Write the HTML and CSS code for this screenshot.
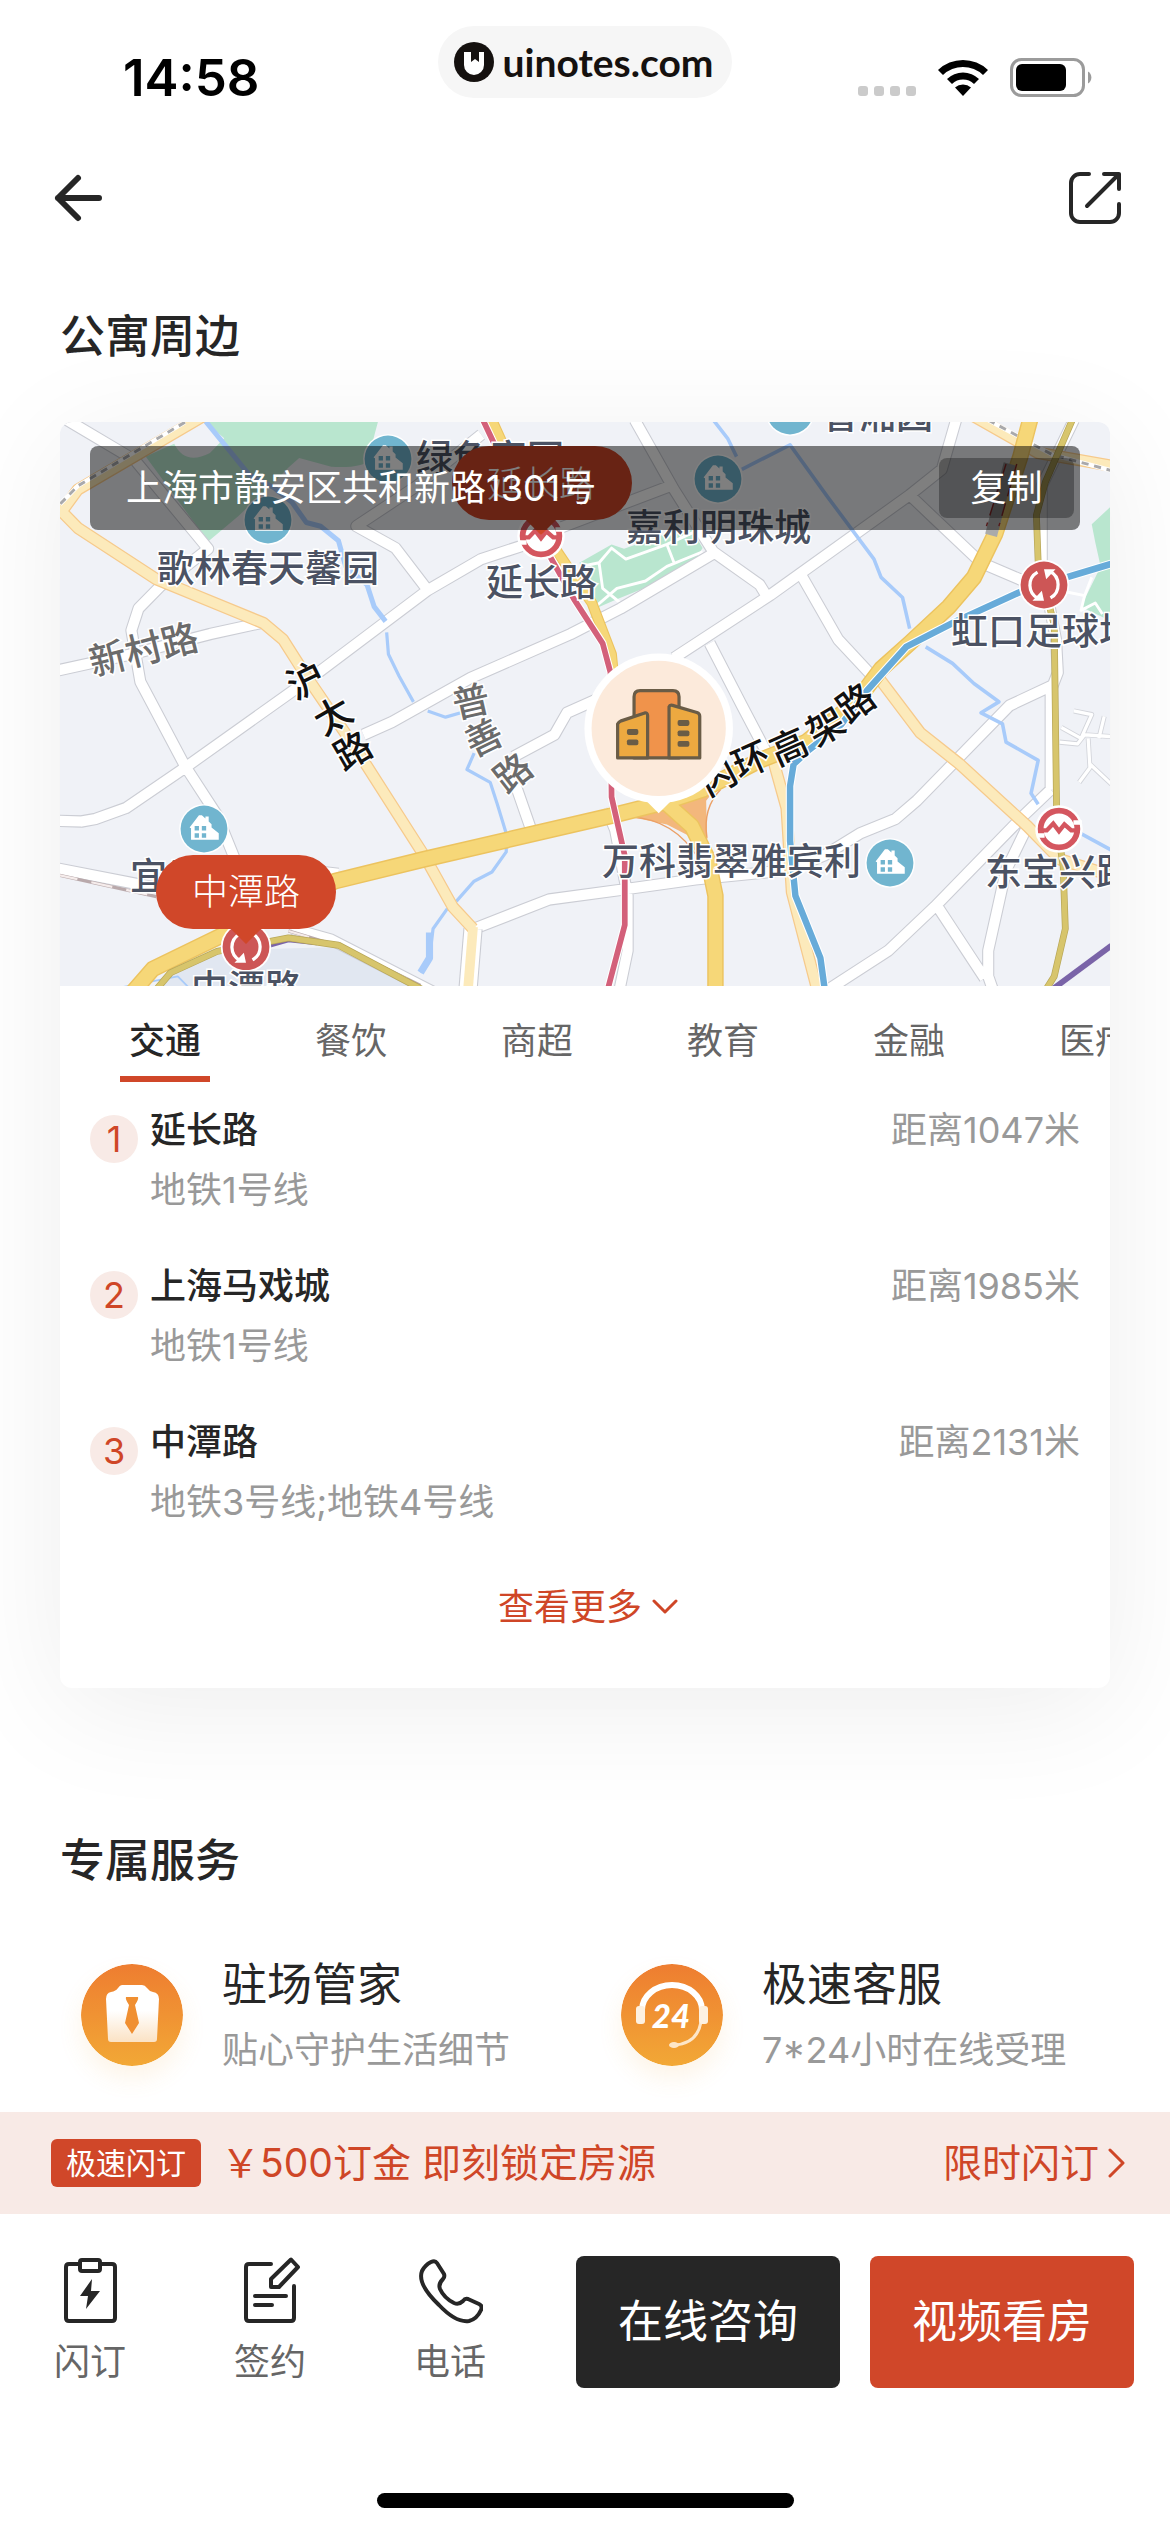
FILE: index.html
```html
<!DOCTYPE html>
<html lang="zh-CN">
<head>
    <meta charset="UTF-8">
    <meta name="viewport" content="width=device-width, initial-scale=1.0">
    <title>公寓周边</title>
    <link rel="stylesheet" href="styles.css">
</head>
<body>

    <header class="status-bar">
        <span class="time">14:58</span>
        <div class="brand">
            <svg width="40" height="40" viewBox="0 0 40 40" aria-hidden="true">
                <circle cx="20" cy="20" r="20" fill="#15110f"/>
                <path d="M10 10h7v10l4-3 4 3V10h5v13a9.500 9.500 0 0 1-20 0z" fill="#fff"/>
            </svg>
            <span>uinotes.com</span>
        </div>
        <div class="status-icons">
            <svg width="58" height="38" viewBox="0 0 58 38" fill="#cbcbcb" aria-hidden="true">
                <rect x="0" y="28" width="10" height="10" rx="3"/>
                <rect x="16" y="28" width="10" height="10" rx="3"/>
                <rect x="32" y="28" width="10" height="10" rx="3"/>
                <rect x="48" y="28" width="10" height="10" rx="3"/>
            </svg>
            <svg width="52" height="38" viewBox="0 0 52 38" aria-hidden="true">
                <path d="M1 12a36 36 0 0 1 50 0l-5 5a29 29 0 0 0-40 0z"/>
                <path d="M10 21a23 23 0 0 1 32 0l-5 5a16 16 0 0 0-22 0z"/>
                <path d="M18 29.500a12 12 0 0 1 16 0L26 38z"/>
            </svg>
            <svg width="82" height="40" viewBox="0 0 82 40" aria-hidden="true">
                <rect x="1.500" y="1.500" width="72" height="36" rx="10" fill="none" stroke="#9b9b9b" stroke-width="3"/>
                <rect x="6" y="6" width="50" height="27" rx="6"/>
                <path d="M78 13.500a7 7 0 0 1 0 12z" fill="#9b9b9b"/>
            </svg>
        </div>
    </header>

    <nav class="nav">
        <button class="icon-button" aria-label="返回">
            <svg width="54" height="54" viewBox="0 0 54 54" fill="none" stroke="#262626" stroke-width="6" stroke-linecap="round" stroke-linejoin="round">
                <path d="M27 7 7 27l20 20M7 27h41"/>
            </svg>
        </button>
        <button class="icon-button" aria-label="分享">
            <svg width="54" height="54" viewBox="0 0 54 54" fill="none" stroke="#262626" stroke-width="4" stroke-linecap="round" stroke-linejoin="round">
                <path d="M21 3h-9a9 9 0 0 0-9 9v30a9 9 0 0 0 9 9h30a9 9 0 0 0 9-9V33M36 3h15v15M51 3 19 35"/>
            </svg>
        </button>
    </nav>

    <main class="content">
        <h1 class="section-title">公寓周边</h1>

        <section class="card">
            <div class="map">
                <svg class="map-canvas" viewBox="0 0 1050 564" preserveAspectRatio="xMidYMid slice" role="img" aria-label="地图">
                    <defs>
                        <g id="home">
                            <circle r="69" fill="#fff"/>
                            <circle r="65" fill="#71b5cf"/>
                            <path d="M-40-4-14-38h8l10 9v-6h9v14l8 8v9l20 16v18h-77V-2z" fill="#fff"/>
                            <path d="M-26-8h12v12h-12zM-6-8H6V4H-6zM-26 12h12v12h-12zM-6 12H6v12H-6z" fill="#71b5cf"/>
                        </g>
                        <g id="loop">
                            <circle r="70" fill="#fff"/>
                            <circle r="65" fill="#cd5656"/>
                            <path d="M-16 38A42 42 0 0 1-18-36M16-38A42 42 0 0 1 18 36" fill="none" stroke="#fff" stroke-width="9"/>
                            <path d="M-32 44H0L-6 16zM32-44H0L6-16z" fill="#fff"/>
                        </g>
                        <g id="metro">
                            <circle r="66" fill="#fff"/>
                            <circle r="51" fill="none" stroke="#d4565f" stroke-width="16"/>
                            <path d="M-62 18h22M40-18h24" stroke="#fff" stroke-width="12"/>
                            <path d="M-58 4h24l18-19L0 6l15-19L34 4h24" fill="none" stroke="#d4565f" stroke-width="12"/>
                        </g>
                        <path id="streets" d="M20 0 210 110 415 352 280 455 220 515 200 575 225 715 350 945 440 1080 490 1200M-10 685 200 640 420 585 560 555M-10 1095 60 1097 100 1090 185 1060 350 950 710 700 1030 465 1180 380 1290 345 1400 295 1710 180M850 860 930 825 1150 705 1430 585 1570 515 1830 365M1720 650 1990 478 2380 205 2470 135 2510 0M1610 0 1720 190 1830 360 1960 450 1985 490M2380 205 2450 270 2580 390 2700 440M2080 430 2180 600 2290 715M1820 610 1910 780 1980 910M1270 920 1385 860 1420 800 1500 765M1270 980 1320 1120M1180 40 1000 180 830 290 940 350 1030 465M-10 1225 280 1280M690 1230 780 1240M650 1390 760 1420 1100 1590M1160 1390 1370 1310 1560 1285 1780 1255 2040 1230 2140 1190 2240 1130 2340 1090 2400 1040 2660 780 2780 725M2130 1570 2320 1450 2450 1330 2700 1080 2775 1010M2455 1325 2590 1525M2710 1110 2650 1230 2600 1450 2600 1520 2625 1590M2840 0 2750 180 2750 400 2790 600 2795 690 2775 740 2775 1010M1530 1060 1555 1120 1590 1300 1590 1450 1560 1590"/>
                        <path id="lanes" d="M2840 795 2890 805 2860 870 2805 840M2800 880 2850 885 2870 860 2945 865M2880 870 2885 950 2855 990M2885 940 2945 995M2910 870 2925 810"/>
                        <path id="roads" d="M400-10 50 190 5 250 50 295 270 435 570 555 625 600 690 700 830 900 1020 1190 1100 1330 1157 1390M2560-10 2740 90 2945 125M2290 700 2410 855 2520 940 2710 1110 2800 1200 2945 1245M1995 920 2035 1060 2050 1290 2130 1590"/>
                        <path id="ring" d="M180 1590 260 1500 460 1405 770 1260 1020 1200 1550 1080 1680 1048 1800 1010 1960 930 2090 880 2230 770 2300 680 2380 610 2490 510 2560 430 2620 310 2690 100 2720-10M1690 1040 1770 1110 1815 1200 1836 1300 1836 1590"/>
                        <path id="elevated" d="M1205-10 1345 290 1400 370 1490 500 1545 640 1550 690"/>
                        <path id="line1" d="M1180-10 1325 290 1440 490 1520 610 1542 690 1545 1030 1582 1190 1582 1380 1525 1590"/>
                        <path id="line8" d="M2945 393 2700 465 2510 550 2370 620 2260 740 2190 830 2100 900 2055 940 2045 1000 2045 1150 2060 1300 2130 1470 2147 1590"/>
                        <path id="line3" d="M2840-10 2760 170 2735 260 2740 390 2785 560 2792 1100 2810 1220 2816 1390 2785 1520 2740 1590M240 1590 310 1510 440 1452 640 1415 780 1435 1080 1590"/>
                    </defs>

                    <g transform="translate(0 -2) scale(.357 .366)" fill="none" stroke-linejoin="round">
                        <!-- parks and blocks -->
                        <g fill="#b9e6cf">
                            <path d="M400 0H892L862 110Q850 132 760 128L670 104 640 130 600 170 500 262 415 332 240 100 320 65Q350 125 420 90L460 50Z"/>
                            <path d="M1455 390 1545 340 1580 352 1700 310 1770 300 1800 350 1780 380 1660 450 1560 490 1500 515 1480 440Z"/>
                            <path d="M2945 235 2890 285 2900 335 2915 400 2880 470 2860 510 2945 550Z"/>
                        </g>
                        <path d="M600 1445 790 1440 1080 1590H250L320 1500 480 1450Z" fill="#e1e7f1"/>
                        <path d="M120 1560 330 1520 400 1590" stroke="#a8cbfa" stroke-width="5"/>
                        <g stroke="#fff" stroke-width="8">
                            <path d="M1460 400 1510 390 1545 350 1585 380 1700 340 1790 300M1500 510 1560 460 1640 440 1700 400 1800 360M1510 390 1520 460 1570 500M1700 340 1720 390"/>
                            <path d="M2820 470 2870 480 2860 520 2900 500 2920 530M2870 480 2890 430"/>
                        </g>

                        <!-- streets: grey edge, then white fill -->
                        <use href="#lanes" stroke="#d3d5db" stroke-width="14"/>
                        <use href="#lanes" stroke="#fff" stroke-width="9"/>
                        <use href="#streets" class="street-edge"/>
                        <use href="#streets" class="street-fill"/>

                        <!-- railway -->
                        <path d="M-10 1242 270 1302M640 1396 790 1440 1010 1545" stroke="#b9a9ab" stroke-width="9"/>
                        <path d="M-10 1242 270 1302M640 1396 790 1440 1010 1545" stroke="#f5eceb" stroke-width="6" stroke-dasharray="60 40"/>

                        <!-- rivers -->
                        <g stroke="#a8cbfa">
                            <path d="M405 0 480 90 530 150 600 185 650 225 690 280 730 290 780 330 800 400 860 450 880 510 912 550" stroke-width="14"/>
                            <path d="M915 580 920 640 950 700 990 770M1030 795 1080 812 1140 795M1160 910 1140 955 1205 990 1225 1050 1250 1130 1250 1180 1210 1235 1160 1260 1110 1315M1085 1335 1045 1390 1035 1470 1010 1510" stroke-width="9"/>
                            <path d="M1830 0 1870 50 1895 100M1910 135 1990 95 2045 68 2150 210 2280 380 2300 430 2360 485 2380 570M2425 620 2500 665 2560 720 2630 770 2580 800 2640 830 2650 880 2740 930 2720 1020 2740 1050M2860 1130 2945 1175" stroke-width="10"/>
                            <path d="M1035 1400 1035 1470 1010 1510" stroke-width="20"/>
                        </g>

                        <!-- secondary roads -->
                        <path d="M1157 1390 1140 1590" stroke="#c9cbd2" stroke-width="54"/>
                        <path d="M1157 1390 1140 1590" stroke="#fff" stroke-width="48"/>
                        <use href="#roads" class="road-edge"/>
                        <use href="#roads" class="road-fill"/>
                        <path d="M1157 1385 1140 1590" class="road-fill"/>
                        <path d="M350 6 50 180 0 230M2600 0 2780 95 2945 138" stroke="#fff" stroke-width="12"/>
                        <path d="M350 6 50 180 0 230M2600 0 2780 95 2945 138" stroke="#a9a9ab" stroke-width="8" stroke-dasharray="20 16"/>

                        <!-- expressways -->
                        <path d="M1600 1085 1640 1040 1730 1010 1850 990 1810 1040 1812 1140 1790 1150 1700 1105Z" fill="#f3b77c"/>
                        <path d="M1600 1085Q1720 1090 1790 1200L1812 1140Q1800 1060 1850 1010" stroke="#eba066" stroke-width="4"/>
                        <use href="#ring" stroke="#ecc35f" stroke-width="46"/>
                        <use href="#ring" stroke="#f6d778" stroke-width="38"/>
                        <use href="#elevated" stroke="#ecc35f" stroke-width="30"/>
                        <use href="#elevated" stroke="#f6d778" stroke-width="24"/>
                        <path d="M2660 120 2608 315" stroke="#aaa" stroke-width="34"/>
                        <path d="M2650 120 2595 290M2680 120 2630 290" stroke="#a33" stroke-width="4" stroke-dasharray="36 20"/>

                        <!-- metro lines -->
                        <use href="#line1" stroke="#fff" stroke-width="22"/>
                        <use href="#line1" stroke="#d3607a" stroke-width="16"/>
                        <use href="#line8" stroke="#fff" stroke-width="24"/>
                        <use href="#line8" stroke="#67abd9" stroke-width="18"/>
                        <path d="M540 1450 640 1422 720 1430" stroke="#7a64a8" stroke-width="10"/>
                        <use href="#line3" stroke="#b8a758" stroke-width="19"/>
                        <use href="#line3" stroke="#d7c56c" stroke-width="15"/>
                        <path d="M2945 1436 2760 1570" stroke="#7a64a8" stroke-width="16"/>
                    </g>

                    <!-- pins -->
                    <use href="#home" transform="translate(328 37) scale(.36)"/>
                    <use href="#home" transform="translate(208 98) scale(.36)"/>
                    <use href="#home" transform="translate(144 407) scale(.36)"/>
                    <use href="#home" transform="translate(658 57) scale(.36)"/>
                    <use href="#home" transform="translate(730 -11) scale(.36)"/>
                    <use href="#home" transform="translate(830 441) scale(.36)"/>
                    <use href="#metro" transform="translate(481 114) scale(.36)"/>
                    <use href="#metro" transform="translate(999 407) scale(.36)"/>
                    <use href="#loop" transform="translate(984 163) scale(.36)"/>
                    <use href="#loop" transform="translate(186 525) scale(.36)"/>

                    <g class="map-label">
                        <text x="356" y="50">绿色家园</text>
                        <text x="762" y="7">香湘园</text>
                        <text x="97" y="160">歌林春天馨园</text>
                        <text x="426" y="174">延长路</text>
                        <text x="566" y="119">嘉利明珠城</text>
                        <text x="891" y="223">虹口足球场</text>
                        <text x="542" y="453">万科翡翠雅宾利</text>
                        <text x="925" y="464">东宝兴路</text>
                        <text x="70" y="468">宜川</text>
                        <text x="131" y="580">中潭路</text>
                    </g>
                    <g class="map-label road-name">
                        <text transform="translate(33 254) rotate(-14)">新村路</text>
                        <g text-anchor="middle">
                            <text transform="translate(411 280) rotate(-13)" y="13">普</text>
                            <text transform="translate(424 316) rotate(-26)" y="13">善</text>
                            <text transform="translate(453 351) rotate(-38)" y="13">路</text>
                        </g>
                    </g>
                    <g class="map-label main-road" text-anchor="middle">
                        <text transform="translate(246 259) rotate(-26)" y="13">沪</text>
                        <text transform="translate(273 294) rotate(-30)" y="13">太</text>
                        <text transform="translate(293 329) rotate(-30)" y="13">路</text>
                        <text transform="translate(658 355) rotate(-28)" y="13">内</text>
                        <text transform="translate(691 338) rotate(-24)" y="13">环</text>
                        <text transform="translate(729 325) rotate(-24)" y="13">高</text>
                        <text transform="translate(766 305) rotate(-30)" y="13">架</text>
                        <text transform="translate(796 281) rotate(-36)" y="13">路</text>
                    </g>

                    <!-- apartment marker -->
                    <g transform="translate(0 4) scale(.357 .36)">
                        <path d="M1610 1010 1677 1076 1744 1010Z" fill="#fff"/>
                        <circle cx="1677" cy="840" r="208" fill="#fff"/>
                        <circle cx="1677" cy="840" r="188" fill="#fceadb"/>
                        <g stroke="#6a5c46" stroke-width="9" stroke-linejoin="round">
                            <path d="M1608 922V752q0-17 17-17h92q17 0 17 17v170z" fill="#f0934b"/>
                            <path d="M1562 922V828q3-6 10-9l66-22q8-1 8 7v118z" fill="#eda940"/>
                            <path d="M1706 922V780q2-6 10-4l68 20q8 3 8 10v116z" fill="#eda940"/>
                        </g>
                        <g fill="#6a5c46">
                            <rect x="1588" y="842" width="32" height="16" rx="5"/>
                            <rect x="1588" y="871" width="32" height="16" rx="5"/>
                            <rect x="1730" y="817" width="33" height="16" rx="5"/>
                            <rect x="1730" y="846" width="33" height="16" rx="5"/>
                            <rect x="1730" y="875" width="33" height="16" rx="5"/>
                        </g>
                    </g>

                    <g class="station">
                        <path d="M392 61a37 37 0 0 1 37-37h106a37 37 0 0 1 0 74h-39l-15 15-15-15h-37a37 37 0 0 1-37-37z"/>
                        <text x="481" y="75">延长路</text>
                        <path d="M96 470a37 37 0 0 1 37-37h106a37 37 0 0 1 0 74h-38l-15 15-15-15h-38a37 37 0 0 1-37-37z"/>
                        <text x="186" y="483">中潭路</text>
                    </g>
                </svg>

                <div class="address">
                    <span>上海市静安区共和新路1301号</span>
                    <button class="copy">复制</button>
                </div>
            </div>

            <div class="tabs">
                <button class="tab active">交通</button>
                <button class="tab">餐饮</button>
                <button class="tab">商超</button>
                <button class="tab">教育</button>
                <button class="tab">金融</button>
                <button class="tab">医疗</button>
            </div>

            <ol class="places">
                <li class="place">
                    <span class="place-num">1</span>
                    <div class="place-text">
                        <h3>延长路</h3>
                        <p>地铁1号线</p>
                    </div>
                    <span class="distance">距离1047米</span>
                </li>
                <li class="place">
                    <span class="place-num">2</span>
                    <div class="place-text">
                        <h3>上海马戏城</h3>
                        <p>地铁1号线</p>
                    </div>
                    <span class="distance">距离1985米</span>
                </li>
                <li class="place">
                    <span class="place-num">3</span>
                    <div class="place-text">
                        <h3>中潭路</h3>
                        <p>地铁3号线;地铁4号线</p>
                    </div>
                    <span class="distance">距离2131米</span>
                </li>
            </ol>

            <button class="more">
                查看更多
                <svg width="26" height="18" viewBox="0 0 26 18" fill="none" stroke="#cf4627" stroke-width="3" stroke-linecap="round" stroke-linejoin="round" aria-hidden="true">
                    <path d="m2 3 11 11L24 3"/>
                </svg>
            </button>
        </section>

        <h2 class="section-title">专属服务</h2>

        <section class="services">
            <div class="service">
                <svg class="service-icon" viewBox="0 0 102 102" aria-hidden="true">
                    <defs>
                        <linearGradient id="orange" x1="0" y1="0" x2="0" y2="1">
                            <stop offset="0" stop-color="#ee7d30"/>
                            <stop offset="1" stop-color="#f2a836"/>
                        </linearGradient>
                        <linearGradient id="cream" x1="0" y1="0" x2="0" y2="1">
                            <stop offset=".45" stop-color="#fff"/>
                            <stop offset="1" stop-color="#fbe2c4"/>
                        </linearGradient>
                    </defs>
                    <circle cx="51" cy="51" r="51" fill="url(#orange)"/>
                    <path d="M41 21h20q3 0 5 3 2 3 6 4 6 1 6 7l-2 40q0 3-3 3H30q-3 0-3-3l-2-40q0-6 5-7t7-4q2-3 4-3z" fill="url(#cream)"/>
                    <path d="M45 33h12q1 2-3 8l4 18-7 11-7-11 4-18q-4-6-3-8z" fill="#f08f31"/>
                </svg>
                <div class="service-text">
                    <h3>驻场管家</h3>
                    <p>贴心守护生活细节</p>
                </div>
            </div>
            <div class="service">
                <svg class="service-icon" viewBox="0 0 102 102" aria-hidden="true">
                    <circle cx="51" cy="51" r="51" fill="url(#orange)"/>
                    <path d="M21 46a30 25 0 0 1 60 0" fill="none" stroke="#fff" stroke-width="6"/>
                    <path d="M80 58Q76 80 53 81" fill="none" stroke="#fde6c9" stroke-width="3"/>
                    <ellipse cx="53" cy="81" rx="5" ry="3" fill="#fde6c9"/>
                    <rect x="15" y="42" width="9" height="18" rx="3" fill="#fdf1e1"/>
                    <rect x="78" y="42" width="9" height="18" rx="3" fill="#fdf1e1"/>
                    <text class="badge-24" x="50" y="64">24</text>
                </svg>
                <div class="service-text">
                    <h3>极速客服</h3>
                    <p>7*24小时在线受理</p>
                </div>
            </div>
        </section>
    </main>

    <footer class="footer">
        <div class="promo">
            <span class="tag">极速闪订</span>
            <span>￥500订金 即刻锁定房源</span>
            <a href="#" class="promo-link">
                限时闪订
                <svg width="18" height="30" viewBox="0 0 18 30" fill="none" stroke="#cf4627" stroke-width="3" stroke-linecap="round" stroke-linejoin="round" aria-hidden="true">
                    <path d="m2 2 13 13L2 28"/>
                </svg>
            </a>
        </div>

        <div class="actions">
            <button class="action">
                <svg width="66" height="72" viewBox="0 0 66 72" fill="none" stroke="#262626" stroke-width="4" stroke-linejoin="round" aria-hidden="true">
                    <path d="M22 8H12q-3 0-3 3v51q0 3 3 3h43q3 0 3-3V11q0-3-3-3H44"/>
                    <rect x="23" y="4" width="20" height="11" rx="2"/>
                    <path d="M35 23 23 40h8l-2 13 14-18h-9z" fill="#262626" stroke="none"/>
                </svg>
                闪订
            </button>
            <button class="action">
                <svg width="66" height="72" viewBox="0 0 66 72" fill="none" stroke="#262626" stroke-width="4" stroke-linecap="round" stroke-linejoin="round" aria-hidden="true">
                    <path d="M34 8H12q-3 0-3 3v51q0 3 3 3h42q3 0 3-3V30"/>
                    <path d="M54 3.500 61 11 42 31h-8v-8z"/>
                    <path d="M18 40h31M18 49h17"/>
                </svg>
                签约
            </button>
            <button class="action">
                <svg width="66" height="72" viewBox="0 0 66 72" fill="none" stroke="#262626" stroke-width="4" stroke-linejoin="round" aria-hidden="true">
                    <path d="M14 6q4-2 6 1l7 11q1 3-1 5-5 5-3 10 4 9 14 14 5 2 9-2 2-3 5-2l11 5q4 2 2 6-4 9-12 11-13 2-30-16Q0 28 5 15q3-6 9-9z"/>
                </svg>
                电话
            </button>
            <div class="buttons">
                <button class="button dark">在线咨询</button>
                <button class="button">视频看房</button>
            </div>
        </div>

        <div class="home-indicator"></div>
    </footer>

</body>
</html>
```
FILE: styles.css
```css
* {
    box-sizing: border-box;
}
body {
    margin: 0;
    min-height: 100vh;
    display: flex;
    flex-direction: column;
    background-color: #fff;
    color: #262626;
    font-family: Inter, "Noto Sans CJK SC", sans-serif;
    font-size: 36px;
    line-height: 60px;
}
h1, h2, h3, p, ol {
    margin: 0;
    padding: 0;
    font-weight: 400;
}
button {
    padding: 0;
    border: none;
    background: none;
    color: inherit;
    font: inherit;
    cursor: pointer;
}
svg {
    display: block;
    flex: none;
}

/* status bar and navigation */
.status-bar {
    display: grid;
    grid-template-columns: 1fr auto 1fr;
    height: 138px;
    padding: 26px 78px 0 123px;
}
.time {
    padding-top: 22px;
    font-size: 51px;
    font-weight: 600;
    color: #000;
}
.brand {
    display: flex;
    align-items: center;
    gap: 8px;
    height: 72px;
    margin-right: 45px;
    padding: 0 18px 0 16px;
    border-radius: 36px;
    background-color: #f6f6f6;
    color: #15110f;
    font-family: Lato, sans-serif;
    font-size: 39px;
    font-weight: 700;
}
.status-icons {
    display: flex;
    justify-content: flex-end;
    gap: 21px;
    padding-top: 32px;
}
.nav {
    display: flex;
    align-items: center;
    justify-content: space-between;
    height: 120px;
    padding: 0 48px 0 51px;
}

/* sections */
.content {
    padding: 0 60px;
}
.section-title {
    padding: 44px 0 50px;
    font-size: 45px;
    line-height: 70px;
    font-weight: 500;
}
.card {
    margin-bottom: 94px;
    border-radius: 12px;
    background-color: #fff;
    box-shadow: 0 20px 120px rgba(0, 0, 0, 0.07);
    overflow: hidden;
}

/* map */
.map {
    position: relative;
    height: 564px;
    background-color: #f0f2f7;
}
.map-canvas {
    width: 100%;
    height: 100%;
}
.street-edge {
    stroke: #cbcdd4;
    stroke-width: 34px;
}
.street-fill {
    stroke: #fff;
    stroke-width: 28px;
}
.road-edge {
    stroke: #f6ca8c;
    stroke-width: 34px;
}
.road-fill {
    stroke: #fceabb;
    stroke-width: 27px;
}
.map-label {
    fill: #4b5263;
    stroke: #fff;
    stroke-width: 3px;
    paint-order: stroke;
    font-size: 37px;
    font-weight: 500;
}
.road-name {
    fill: #6b6b6b;
}
.main-road {
    fill: #111;
}
.station {
    fill: #d04729;
    font-size: 36px;
    text-anchor: middle;
}
.station text {
    fill: #fff;
    font-weight: 300;
}
.address {
    position: absolute;
    top: 24px;
    left: 30px;
    right: 30px;
    display: flex;
    align-items: center;
    justify-content: space-between;
    height: 84px;
    padding: 0 6px 0 36px;
    border-radius: 8px;
    background-color: rgba(0, 0, 0, 0.5);
    color: #fff;
}
.copy {
    width: 135px;
    height: 60px;
    border-radius: 8px;
    background-color: rgba(0, 0, 0, 0.3);
}

/* tabs */
.tabs {
    display: flex;
    padding-left: 12px;
    overflow: hidden;
}
.tab {
    display: flex;
    flex-direction: column;
    align-items: center;
    flex: none;
    width: 186px;
    height: 96px;
    padding-top: 25px;
    color: #666;
}
.tab.active {
    color: #262626;
    font-weight: 500;
}
.tab.active::after {
    content: "";
    width: 90px;
    height: 6px;
    margin-top: 5px;
    background-color: #d04729;
}

/* nearby places */
.places {
    display: flex;
    flex-direction: column;
    gap: 36px;
    padding: 18px 30px 45px;
    list-style: none;
}
.place {
    display: flex;
    gap: 12px;
}
.place-num {
    width: 48px;
    height: 48px;
    margin-top: 15px;
    border-radius: 50%;
    background-color: #f8eae6;
    color: #cf4627;
    line-height: 48px;
    text-align: center;
}
.place-text {
    flex: 1;
}
.place h3 {
    font-size: 36px;
    font-weight: 500;
}
.place p, .distance {
    color: #999;
}
.more {
    display: flex;
    align-items: center;
    justify-content: center;
    gap: 10px;
    width: 100%;
    padding: 0 0 51px 6px;
    color: #cf4627;
}

/* services */
.services {
    display: grid;
    grid-template-columns: 540px 1fr;
    padding: 4px 0 30px 21px;
}
.service {
    display: flex;
    align-items: center;
    gap: 39px;
}
.service-icon {
    width: 102px;
    height: 102px;
    border-radius: 50%;
    box-shadow: 0 12px 24px rgba(242, 168, 54, 0.12);
}
.service h3 {
    font-size: 45px;
    line-height: 70px;
}
.service p {
    color: #999;
}
.badge-24 {
    fill: #fff;
    font-family: Lato, sans-serif;
    font-size: 33px;
    font-style: italic;
    font-weight: 900;
    text-anchor: middle;
}

/* footer */
.footer {
    margin-top: auto;
    background-color: #fff;
}
.promo {
    display: flex;
    align-items: center;
    height: 102px;
    padding: 0 44px 0 51px;
    background-color: #f8eae6;
    color: #cf4627;
    font-size: 39px;
}
.tag {
    margin-right: 20px;
    padding: 0 15px;
    border-radius: 6px;
    background-color: #d04729;
    color: #fff;
    font-size: 30px;
    line-height: 48px;
}
.promo-link {
    display: flex;
    align-items: center;
    gap: 9px;
    margin-left: auto;
    color: inherit;
    text-decoration: none;
}
.actions {
    display: flex;
    align-items: flex-start;
    padding: 42px 36px 0 0;
}
.action {
    display: flex;
    flex-direction: column;
    align-items: center;
    gap: 4px;
    width: 180px;
    color: #666;
}
.buttons {
    display: flex;
    flex: 1;
    gap: 30px;
    margin-left: 36px;
}
.button {
    flex: 1;
    height: 132px;
    border-radius: 8px;
    background-color: #d04729;
    color: #fff;
    font-size: 45px;
}
.button.dark {
    background-color: #262626;
}
.home-indicator {
    width: 417px;
    height: 15px;
    margin: 101px auto 24px;
    border-radius: 8px;
    background-color: #000;
}
```
